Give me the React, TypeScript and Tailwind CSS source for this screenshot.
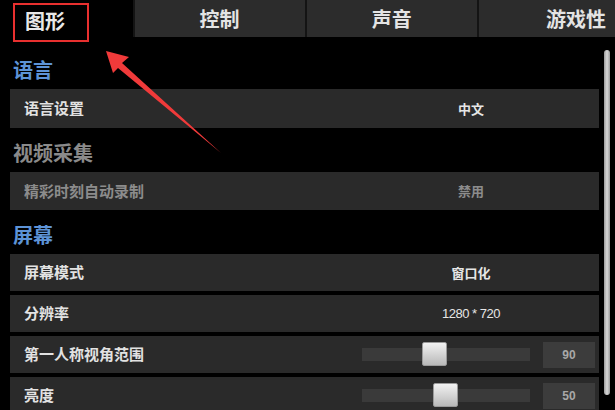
import React from 'react';

const FONT = "font-['Noto_Sans_CJK_SC','Noto_Sans',sans-serif]";

const TABS = ['控制', '声音', '游戏性'];

function Heading({ text, muted }: { text: string; muted?: boolean }) {
  return (
    <div
      className={`h-[44px] flex items-center pt-[6px] pl-[3px] text-[20px] font-semibold ${
        muted ? 'text-[#8a8a8a]' : 'text-[#5d93d6]'
      }`}
    >
      {text}
    </div>
  );
}

function ValueRow({
  label,
  value,
  muted,
  h,
  thin,
}: {
  label: string;
  value: string;
  muted?: boolean;
  h: string;
  thin?: boolean;
}) {
  return (
    <div className={`${h} flex items-center bg-[#2a2a2a] mr-[16px]`}>
      <div className={`flex-1 pl-[14px] text-[15px] font-bold ${muted ? 'text-[#8c8c8c]' : 'text-[#e2e2e2]'}`}>
        {label}
      </div>
      <div
        className={`w-[256px] text-center ${
          thin ? "text-[13px] font-normal tracking-[-0.5px] font-['Liberation_Sans_Narrow','Liberation_Sans',sans-serif]" : 'text-[13px] font-bold'
        } ${muted ? 'text-[#8c8c8c]' : 'text-[#e6e6e6]'}`}
      >
        {value}
      </div>
    </div>
  );
}

function SliderRow({ label, value, thumb }: { label: string; value: string; thumb: number }) {
  return (
    <div className="h-[37px] flex items-center bg-[#2a2a2a] mr-[16px]">
      <div className="flex-1 pl-[14px] text-[15px] font-bold text-[#e2e2e2]">{label}</div>
      <div className="relative w-[168px] h-[13px] bg-[#3a3a3a]">
        <div
          className="absolute top-[-6px] w-[25px] h-[24px] rounded-[2px] bg-gradient-to-b from-[#f2f2f2] to-[#b9b9b9] border border-[#9a9a9a]"
          style={{ left: thumb }}
        />
      </div>
      <div className="ml-[13px] mr-[4px] w-[52px] h-[26px] bg-[#3c3c3c] flex items-center justify-center text-[12px] font-bold text-[#a8a8a8] font-['Liberation_Sans',sans-serif]">
        {value}
      </div>
    </div>
  );
}

export default function App() {
  return (
    <div className={`relative w-[615px] h-[410px] bg-black overflow-hidden ${FONT}`}>
      {/* Tab bar */}
      <div className="flex h-[37px]">
        <div className="w-[135px] flex items-center pl-[25px] pt-[4px] text-[20px] font-bold text-[#e8e8e8]">
          图形
        </div>
        {TABS.map((t, i) => (
          <div
            key={t}
            className={`flex items-center justify-center bg-[#2c2c2c] text-[20px] font-bold text-[#e4e4e4] border-l-2 border-[#141414] ${
              i === 2 ? 'w-[140px] pl-[58px]' : 'w-[176px]'
            }`}
          >
            {t}
          </div>
        ))}
      </div>

      {/* Settings list */}
      <div className="pl-[10px] pt-[8px]">
        <Heading text="语言" />
        <ValueRow label="语言设置" value="中文" h="h-[39px]" />
        <Heading text="视频采集" muted />
        <ValueRow label="精彩时刻自动录制" value="禁用" muted h="h-[38px]" />
        <Heading text="屏幕" />
        <div className="flex flex-col gap-[4px]">
          <ValueRow label="屏幕模式" value="窗口化" h="h-[37px]" />
          <ValueRow label="分辨率" value="1280 * 720" h="h-[37px]" thin />
          <SliderRow label="第一人称视角范围" value="90" thumb={60} />
          <SliderRow label="亮度" value="50" thumb={71} />
        </div>
      </div>

      {/* Scrollbar */}
      <div className="absolute left-[604px] top-[50px] w-[6px] h-[345px] rounded-full bg-gradient-to-r from-[#9a9a9a] via-[#d8d8d8] to-[#9a9a9a]" />

      {/* Annotation: red box + arrow */}
      <div className="absolute left-[13px] top-[3px] w-[76px] h-[39px] border-2 border-[#e8302f]" />
      <svg className="absolute left-0 top-0" width="615" height="410" viewBox="0 0 615 410">
        <polygon points="106,51 129,57 122,63 221,153 118,68 113,73" fill="#f03a3a" />
      </svg>
    </div>
  );
}
